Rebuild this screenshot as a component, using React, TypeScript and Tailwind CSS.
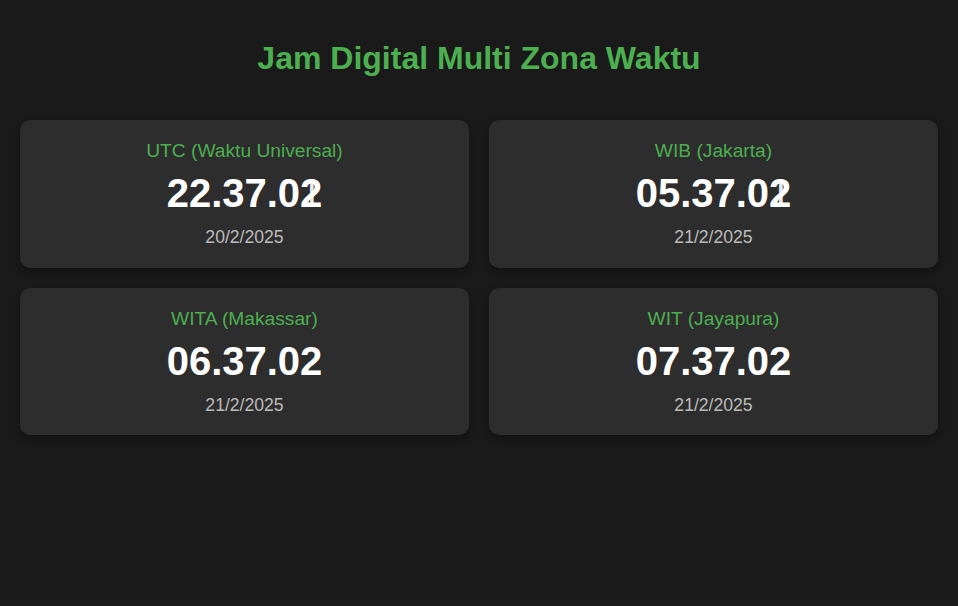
import React from 'react';

type Zone = {
  label: string;
  time: string;
  ghost?: string;
  date: string;
};

const zones: Zone[] = [
  { label: 'UTC (Waktu Universal)', time: '22.37.0', ghost: '1', date: '20/2/2025' },
  { label: 'WIB (Jakarta)', time: '05.37.0', ghost: '1', date: '21/2/2025' },
  { label: 'WITA (Makassar)', time: '06.37.0', date: '21/2/2025' },
  { label: 'WIT (Jayapura)', time: '07.37.0', date: '21/2/2025' },
];

const ClockCard: React.FC<{ zone: Zone }> = ({ zone }) => (
  <div className="bg-[#2d2d2d] rounded-[10px] p-5 text-center shadow-[0_4px_8px_rgba(0,0,0,0.3)]">
    <div className="text-[19.2px] leading-[21px] text-[#4caf50]">{zone.label}</div>
    <div className="mt-[9px] text-[40px] leading-[46px] font-bold text-white">
      {zone.time}
      <span className="relative inline-block">
        2
        {/* digit caught mid-update in the screenshot */}
        {zone.ghost && <span className="absolute left-0 top-0 font-normal opacity-90">{zone.ghost}</span>}
      </span>
    </div>
    <div className="mt-[11px] text-[17.6px] leading-[20.7px] text-[#bbbbbb]">{zone.date}</div>
  </div>
);

export default function App() {
  return (
    <div className="min-h-screen bg-[#1a1a1a] p-5 font-['Liberation_Sans',Arial,sans-serif]">
      <h1 className="mt-[20px] text-center text-[32px] leading-[37px] font-bold text-[#4caf50]">
        Jam Digital Multi Zona Waktu
      </h1>
      <div className="mt-[43px] grid grid-cols-2 gap-5">
        {zones.map((z) => (
          <ClockCard key={z.label} zone={z} />
        ))}
      </div>
    </div>
  );
}
